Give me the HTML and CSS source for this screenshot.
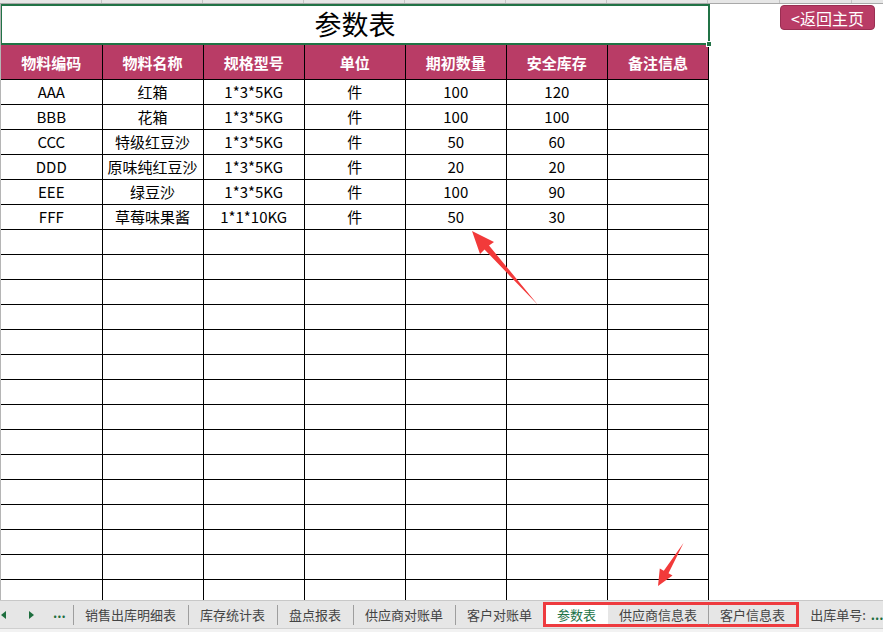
FILE: index.html
```html
<!DOCTYPE html>
<html lang="zh">
<head>
<meta charset="utf-8">
<link rel="stylesheet" href="styles.css">
</head>
<body>
<div class="page">
  <div class="colbar">
    <span class="ch"></span><span class="ch"></span><span class="ch"></span><span class="ch"></span><span class="ch"></span><span class="ch"></span><span class="ch"></span><span class="ch ch-h"></span><span class="ch ch-i"></span><span class="ch ch-rest"></span>
  </div>
  <div class="sheet">
    <div class="title">参数表<span class="handle"></span></div>
    <table class="grid">
      <colgroup><col><col><col><col><col><col><col></colgroup>
      <thead>
        <tr><th>物料编码</th><th>物料名称</th><th>规格型号</th><th>单位</th><th>期初数量</th><th>安全库存</th><th>备注信息</th></tr>
      </thead>
      <tbody>
        <tr><td>AAA</td><td>红箱</td><td>1*3*5KG</td><td>件</td><td>100</td><td>120</td><td></td></tr>
        <tr><td>BBB</td><td>花箱</td><td>1*3*5KG</td><td>件</td><td>100</td><td>100</td><td></td></tr>
        <tr><td>CCC</td><td>特级红豆沙</td><td>1*3*5KG</td><td>件</td><td>50</td><td>60</td><td></td></tr>
        <tr><td>DDD</td><td>原味纯红豆沙</td><td>1*3*5KG</td><td>件</td><td>20</td><td>20</td><td></td></tr>
        <tr><td>EEE</td><td>绿豆沙</td><td>1*3*5KG</td><td>件</td><td>100</td><td>90</td><td></td></tr>
        <tr><td>FFF</td><td>草莓味果酱</td><td>1*1*10KG</td><td>件</td><td>50</td><td>30</td><td></td></tr>
        <tr><td></td><td></td><td></td><td></td><td></td><td></td><td></td></tr>
        <tr><td></td><td></td><td></td><td></td><td></td><td></td><td></td></tr>
        <tr><td></td><td></td><td></td><td></td><td></td><td></td><td></td></tr>
        <tr><td></td><td></td><td></td><td></td><td></td><td></td><td></td></tr>
        <tr><td></td><td></td><td></td><td></td><td></td><td></td><td></td></tr>
        <tr><td></td><td></td><td></td><td></td><td></td><td></td><td></td></tr>
        <tr><td></td><td></td><td></td><td></td><td></td><td></td><td></td></tr>
        <tr><td></td><td></td><td></td><td></td><td></td><td></td><td></td></tr>
        <tr><td></td><td></td><td></td><td></td><td></td><td></td><td></td></tr>
        <tr><td></td><td></td><td></td><td></td><td></td><td></td><td></td></tr>
        <tr><td></td><td></td><td></td><td></td><td></td><td></td><td></td></tr>
        <tr><td></td><td></td><td></td><td></td><td></td><td></td><td></td></tr>
        <tr><td></td><td></td><td></td><td></td><td></td><td></td><td></td></tr>
        <tr><td></td><td></td><td></td><td></td><td></td><td></td><td></td></tr>
        <tr><td></td><td></td><td></td><td></td><td></td><td></td><td></td></tr>
      </tbody>
    </table>
  </div>
  <div class="tabbar">
    <span class="nav nav-l"><span class="tri tri-l"></span></span>
    <span class="nav nav-r"><span class="tri tri-r"></span></span>
    <span class="more">...</span>
    <span class="sep"></span>
    <span class="tab">销售出库明细表</span><span class="sep"></span>
    <span class="tab">库存统计表</span><span class="sep"></span>
    <span class="tab">盘点报表</span><span class="sep"></span>
    <span class="tab">供应商对账单</span><span class="sep"></span>
    <span class="tab">客户对账单</span>
    <span class="group">
      <span class="tab active">参数表</span>
      <span class="tab">供应商信息表</span><span class="sep"></span>
      <span class="tab">客户信息表</span>
    </span>
    <span class="tab last">出库单号:<span class="dots">...</span></span>
  </div>
  <div class="status"></div>

  <button class="back">&lt;返回主页</button>

  <svg class="arrows" width="883" height="632" viewBox="0 0 883 632">
    <polygon points="472,231 494,242 489,245.5 538,305 484.5,249.5 480,254" fill="#f23a3a"/>
    <polygon points="658,586 672.5,575.5 668.5,573.2 683.5,543 663.8,570.8 659.8,568.5" fill="#f23a3a"/>
  </svg>
</div>
</body>
</html>
```
FILE: styles.css
```css
* { box-sizing: border-box; }
html, body { margin: 0; padding: 0; background: #fff; }
body {
  font-family: "Noto Sans CJK SC", "Noto Sans", sans-serif;
  color: #000;
}
.page {
  position: relative;
  width: 883px;
  height: 632px;
  overflow: hidden;
  display: flex;
  flex-direction: column;
}
.colbar {
  display: flex;
  height: 4px;
  background: #e6e6e6;
  border-bottom: 1px solid #a9a9a9;
  flex: none;
}
.ch { width: 101px; border-right: 1px solid #c4c4c4; flex: none; }
.ch:first-child { width: 102px; }
.ch-h { width: 72px; }
.ch-i { width: 72px; }
.ch-rest { flex: 1; border-right: none; }

.sheet {
  flex: 1;
  display: flex;
  flex-direction: column;
  overflow: hidden;
  border-left: 1px solid #b5b5b5;
}
.title {
  position: relative;
  width: 710px;
  height: 41px;
  margin-left: -1px;
  border: 2px solid #217346;
  text-align: center;
  font-size: 27px;
  line-height: 36px;
  flex: none;
}
.handle {
  position: absolute;
  right: -4px;
  bottom: -4px;
  width: 6px;
  height: 6px;
  background: #217346;
  border: 1px solid #fff;
}
.grid {
  border-collapse: collapse;
  table-layout: fixed;
  width: 708px;
  margin-top: -1px;
}
.grid col { width: 101px; }
.grid th, .grid td {
  border: 1px solid #000;
  padding: 0;
  text-align: center;
  white-space: nowrap;
  overflow: hidden;
}
.grid tr > :first-child { border-left: none; }
.grid th {
  background: #b93c66;
  color: #fff;
  font-weight: bold;
  font-size: 15px;
  height: 35px;
}
.grid td {
  height: 25px;
  font-size: 15px;
  line-height: 18px;
}

.tabbar {
  flex: none;
  height: 28px;
  background: #e6e6e6;
  display: flex;
  align-items: center;
  font-size: 13px;
  color: #444;
  border-top: 1px solid #c8c8c8;
}
.nav {
  display: flex;
  flex: none;
}
.nav-l { width: 27px; padding-left: 1px; }
.nav-r { width: 24px; padding-left: 2px; }
.tri {
  width: 0; height: 0;
  border-top: 4px solid transparent;
  border-bottom: 4px solid transparent;
}
.tri-l { border-right: 5px solid #1e6e3e; }
.tri-r { border-left: 5px solid #1e6e3e; }
.more {
  color: #1e6e3e;
  font-weight: bold;
  font-size: 13px;
  margin-left: 2px;
  width: 20px;
  line-height: 10px;
  padding-bottom: 4px;
  flex: none;
}
.sep {
  width: 1px;
  height: 20px;
  background: #9e9e9e;
  flex: none;
}
.tab {
  padding: 0 12px 0 11px;
  white-space: nowrap;
  line-height: 22px;
  flex: none;
}
.group {
  display: flex;
  align-items: center;
  height: 25px;
  margin-left: -1px;
  border: 3px solid #ee3b3f;
  flex: none;
}
.group .tab { padding: 0 11px; line-height: 19px; }
.tab.active {
  background: #fff;
  color: #217346;
  height: 19px;
  padding: 0 12px 0 11px;
}
.tab.last { padding: 0 0 0 11px; flex: 1; overflow: hidden; }
.dots { color: #1e6e3e; font-weight: bold; margin-left: 5px; }
.status {
  flex: none;
  height: 4px;
  background: #f2f2f2;
  border-top: 1px solid #cfcfcf;
}

.back {
  position: absolute;
  left: 780px;
  top: 5px;
  width: 95px;
  height: 25px;
  background: #b93c66;
  border: 1px solid #9a2e52;
  border-radius: 4px;
  color: #fff;
  font-family: "Noto Sans CJK SC", sans-serif;
  font-size: 16px;
  padding: 0;
  line-height: 22px;
}
.arrows {
  position: absolute;
  left: 0;
  top: 0;
  pointer-events: none;
}
```
